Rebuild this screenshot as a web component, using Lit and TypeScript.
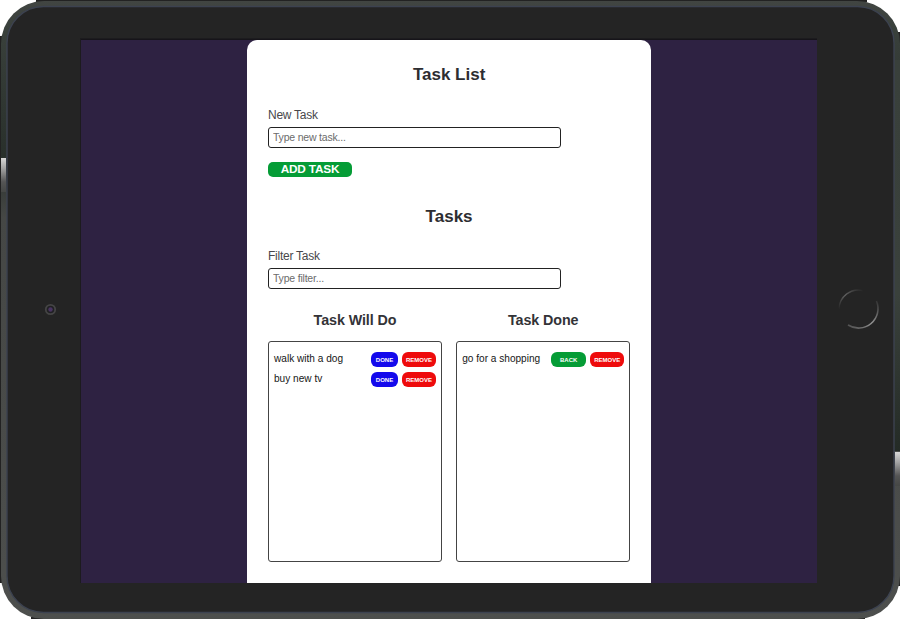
import { LitElement, html, css } from "lit";
import { customElement, property } from "lit/decorators.js";

@customElement("task-column")
class TaskColumn extends LitElement {
  @property() heading = "";
  @property({ attribute: false }) tasks: string[] = [];
  @property({ type: Boolean }) done = false;

  static styles = css`
    :host { display: block; width: 174px; }
    h3 { margin: 0 0 12px; text-align: center; font-size: 14.3px; line-height: 18px; letter-spacing: -0.08px; color: #333337; }
    ul { list-style: none; margin: 0; padding: 8px 5px 0; height: 221px; box-sizing: border-box; border: 1px solid #444; border-radius: 3px; }
    li { display: flex; align-items: center; height: 20.5px; font-size: 10.1px; color: #161616; }
    .name { flex: 1; white-space: nowrap; line-height: 14px; padding-bottom: 3px; }
    button { border: 0; padding: 1px 0 0; margin: 0 0 2px 4px; height: 15px; border-radius: 6px; color: #fff; font: bold 6px/14px "Liberation Sans", Arial, sans-serif; }
    .finish { width: 27px; background: #1409ec; }
    .back { width: 35px; background: #059c36; }
    .remove { width: 34px; background: #ee0b0c; }
  `;

  render() {
    return html`
      <h3>${this.heading}</h3>
      <ul>
        ${this.tasks.map((t) => html`<li>
          <span class="name">${t}</span>
          <button class=${this.done ? "back" : "finish"}>${this.done ? "BACK" : "DONE"}</button>
          <button class="remove">REMOVE</button>
        </li>`)}
      </ul>`;
  }
}

@customElement("app-root")
class AppRoot extends LitElement {
  static styles = css`
    :host { display: block; width: 900px; height: 619px; background: #fff; font-family: "Liberation Sans", Arial, sans-serif; overflow: hidden; position: relative; }
    .device { position: absolute; inset: 0; display: block; }
    .screen { position: relative; box-sizing: border-box; width: 736px; height: 544px; margin: 39px 0 0 81px; background: #2e2242; border-top: 1px solid #161419; display: flex; overflow: hidden; }
    .card { box-sizing: border-box; width: 404.8px; height: 543px; margin-left: 165.6px; padding: 24px 21.2px 0 21.4px; background: #fff; border-radius: 10px 10px 0 0; }
    .frame { height: 619px; display: flow-root; }
    h2 { margin: 0; text-align: center; font-size: 17px; line-height: 22px; color: #2d2d31; }
    label { display: block; font-size: 12px; line-height: 14px; letter-spacing: -0.25px; color: #48484b; }
    .first { margin-top: 22px; }
    .second { margin-top: 21px; }
    input { display: block; box-sizing: border-box; width: 293px; height: 21px; margin: 5px 0 0; padding: 0 4px 1px; border: 1px solid #222; border-radius: 3px; background: #fff; font: 10.5px "Liberation Sans", Arial, sans-serif; letter-spacing: -0.2px; }
    input::placeholder { color: #6b6b6b; opacity: 1; }
    .add { display: block; width: 84px; height: 15px; margin: 14px 0 29px; padding: 0; border: 0; border-radius: 5px; background: #059c36; color: #fff; font: bold 11.8px/15px "Liberation Sans", Arial, sans-serif; letter-spacing: -0.2px; }
    .columns { display: flex; justify-content: space-between; margin-top: 22px; }
  `;

  render() {
    return html`
      <svg class="device" width="900" height="619" viewBox="0 0 900 619">
        <defs>
          <linearGradient id="rim" x1="0" y1="0" x2="0" y2="1">
            <stop offset="0" stop-color="#414542" /><stop offset=".05" stop-color="#39403b" />
            <stop offset=".25" stop-color="#29302b" /><stop offset=".35" stop-color="#454745" /><stop offset="1" stop-color="#4d4f4d" />
          </linearGradient>
          <linearGradient id="rimRight" x1="0" y1="0" x2="0" y2="1">
            <stop offset="0" stop-color="#39403b" /><stop offset=".6" stop-color="#3a413c" />
            <stop offset="1" stop-color="#242b26" />
          </linearGradient>
          <linearGradient id="glint" x1="0" y1="0" x2="0" y2="1">
            <stop offset="0" stop-color="#d8d8d8" /><stop offset=".3" stop-color="#a4a4a4" /><stop offset=".7" stop-color="#555" /><stop offset="1" stop-color="#454745" />
          </linearGradient>
          <linearGradient id="ringA" x1="0" y1="1" x2="1" y2="0">
            <stop offset="0" stop-color="#242424" /><stop offset=".5" stop-color="#626262" /><stop offset="1" stop-color="#242424" />
          </linearGradient>
          <linearGradient id="ringB" x1="0" y1="1" x2="1" y2="0">
            <stop offset="0" stop-color="#4c4c4c" /><stop offset=".5" stop-color="#929292" /><stop offset="1" stop-color="#303030" />
          </linearGradient>
        </defs>
        <path d="M0 36H2V583H0ZM36 0H867V2H36ZM898 32H900V586H898ZM31 617H865V619H31Z" fill="#222" />
        <rect x="1" y="1" width="899" height="618" rx="43" fill="url(#rim)" />
        <path d="M894 60H900V451H894Z" fill="url(#rimRight)" />
        <rect x="1" y="158" width="5" height="34" fill="url(#glint)" />
        <rect x="895" y="452" width="5" height="34" fill="url(#glint)" />
        <rect x="7" y="6.5" width="887" height="606" rx="36.5" fill="#242424" stroke="#3c4250" stroke-width="1.4" />
        <rect x="80" y="38" width="737" height="545" fill="#1c1b1e" />
        <circle cx="50.5" cy="309.5" r="4.7" fill="#202023" stroke="#454545" stroke-width="1.8" />
        <circle cx="50.5" cy="309.5" r="2.2" fill="#493462" />
        <path d="M839 309A19.5 19.5 0 0 1 863 290.5" fill="none" stroke="url(#ringA)" stroke-width="1.5" />
        <path d="M848 325A19.5 19.5 0 0 0 876.5 301" fill="none" stroke="url(#ringB)" stroke-width="1.6" />
      </svg>
      <div class="frame">
        <main class="screen">
          <section class="card">
            <h2>Task List</h2>
            <label class="first">New Task</label>
            <input placeholder="Type new task..." />
            <button class="add">ADD TASK</button>
            <h2>Tasks</h2>
            <label class="second">Filter Task</label>
            <input placeholder="Type filter..." />
            <div class="columns">
              <task-column heading="Task Will Do" .tasks=${["walk with a dog", "buy new tv"]}></task-column>
              <task-column heading="Task Done" done .tasks=${["go for a shopping"]}></task-column>
            </div>
          </section>
        </main>
      </div>`;
  }
}
